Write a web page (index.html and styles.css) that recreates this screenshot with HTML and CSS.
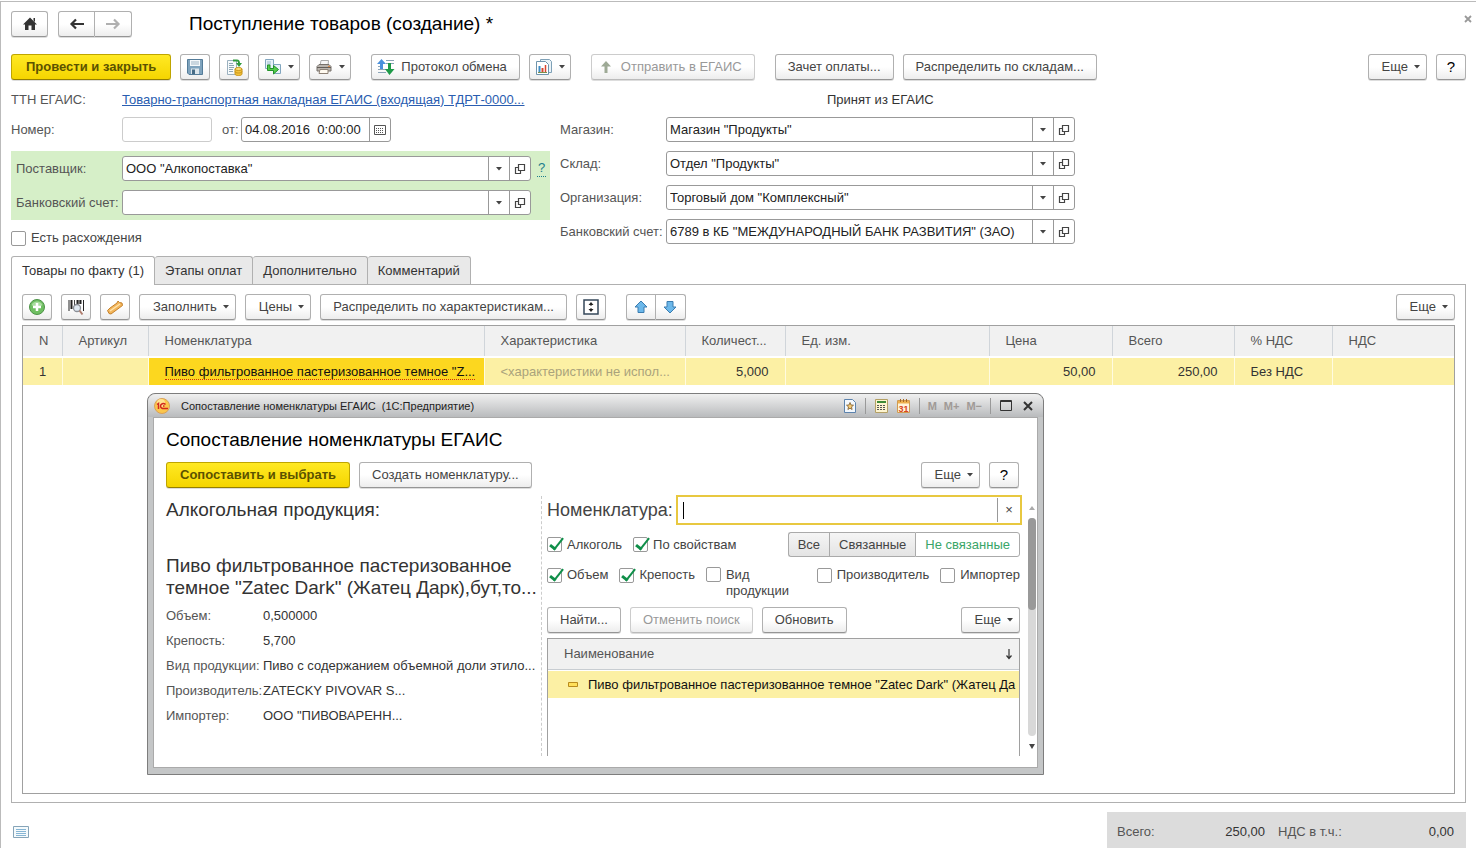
FILE: index.html
```html
<!DOCTYPE html>
<html lang="ru">
<head>
<meta charset="utf-8">
<title>Поступление товаров (создание)</title>
<link rel="stylesheet" href="styles.css">
</head>
<body>
<svg class="defs" aria-hidden="true">
  <symbol id="open" viewBox="0 0 12 12"><path d="M4.5 1.5h6v6h-6zM4 4.500H1.500v6h5V8" fill="none" stroke="#444" stroke-width="1.2"/></symbol>
  <symbol id="caret" viewBox="0 0 6 4"><path d="M0 0h6L3 3.500z" fill="#444"/></symbol>
</svg>
<main class="page">
  <header class="head">
    <button class="btn home" aria-label="Начальная страница"><svg width="16" height="14" viewBox="0 0 16 14"><path d="M8 .5 15 7.500h-2V13H9.500V8.500h-3V13H3V7.500H1zM11.500 1H13v4l-1.500-1.500z" fill="#333"/></svg></button>
    <div class="group">
      <button class="btn" aria-label="Назад"><svg width="16" height="12" viewBox="0 0 16 12"><path d="M15 6H3M7 1.500 2.500 6 7 10.500" fill="none" stroke="#333" stroke-width="2.200"/></svg></button>
      <button class="btn" aria-label="Вперед"><svg width="16" height="12" viewBox="0 0 16 12"><path d="M1 6h12M9 1.500 13.500 6 9 10.500" fill="none" stroke="#b0b0b0" stroke-width="2.200"/></svg></button>
    </div>
    <h1>Поступление товаров (создание) *</h1>
    <button class="close" aria-label="Закрыть"><svg width="8" height="8" viewBox="0 0 8 8"><path d="M1 1l6 6M7 1 1 7" stroke="#999" stroke-width="1.800"/></svg></button>
  </header>

  <div class="bar">
    <button class="btn primary">Провести и закрыть</button>
    <button class="btn icon" aria-label="Записать"><svg width="18" height="18" viewBox="0 0 18 18"><path d="M1.500 1.500h15v15H3l-1.500-1.500z" fill="#7fa3bd" stroke="#547c99"/><path d="M4 2h10v6H4z" fill="#f4f8fa"/><path d="M5 4h8M5 6h8" stroke="#9fb5c4"/><path d="M5 10.500h8V16H5z" fill="#dce6ec"/><path d="M6 11.500h3V16H6z" fill="#476c87"/></svg></button>
    <button class="btn icon" aria-label="Провести"><svg width="18" height="18" viewBox="0 0 18 18"><path d="M2.500 2.500h9v14h-9z" fill="#f6fafc" stroke="#9bb1bf"/><path d="M4 5.500h4M4 7.500h5M4 9.500h5M4 11.500h4M4 13.500h4" stroke="#8fa6b5"/><path d="M8 2.500h4c2 0 2 1 2 3" fill="none" stroke="#2f9a3c" stroke-width="2"/><path d="M11 5h6l-3 4z" fill="#2f9a3c"/><path d="M10 11v5c0 2 7 2 7 0v-5" fill="#f3c33d" stroke="#c99418"/><ellipse cx="13.500" cy="11" rx="3.500" ry="1.500" fill="#ffe27a" stroke="#c99418"/><path d="M10 13.500c0 2 7 2 7 0" fill="none" stroke="#c99418"/></svg></button>
    <button class="btn icon drop" aria-label="Создать на основании"><svg width="18" height="18" viewBox="0 0 18 18"><path d="M1.500 1.500h8v9h-8zM9.500 6.500h7v9h-7z" fill="#e8f2f9" stroke="#82a6bf"/><path d="M3 4h4M3 6h4" stroke="#9dbacd"/><path d="M3.500 7v5.500h6V16l5-4.500-5-4v3H6V7z" fill="#55cb4b" stroke="#21932a"/></svg><svg class="caret"><use href="#caret"/></svg></button>
    <button class="btn icon drop" aria-label="Печать"><svg width="18" height="18" viewBox="0 0 18 18"><path d="M5 8 6 2.500h7.500L13 8z" fill="#f7f7f7" stroke="#aaa"/><path d="M2 8.500 4 6.500h10l2 2V13H2z" fill="#b9b4ae" stroke="#77716b"/><path d="M2 9.500h14" stroke="#625d58"/><path d="M5 11.500h8v4H4z" fill="#fffaf0" stroke="#8d8175"/><circle cx="14" cy="8.500" r=".8" fill="#e37b27"/></svg><svg class="caret"><use href="#caret"/></svg></button>
    <button class="btn gap"><svg class="lead" width="18" height="18" viewBox="0 0 18 18"><path d="M9 2.500h8M9 5.500h2M14 5.500h3M1 11.500h8M1 14.500h8M1 8.500h2" stroke="#8ba5b8"/><path d="M4.500 1 9 6H6v5H3V6H0z" fill="#4a90dc"/><path d="M11 5h3v6h3.500L12.500 17 8 11h3z" fill="#1e9a48"/></svg>Протокол обмена</button>
    <button class="btn icon drop" aria-label="Отчеты"><svg width="18" height="18" viewBox="0 0 18 18"><path d="M5.500 1.500h9l2 2v11h-11z" fill="#eaf3f8" stroke="#7fa1b7"/><path d="M1.500 3.500h9l3 3v10h-12z" fill="#fff" stroke="#6e94ac"/><path d="M4.500 8v6" stroke="#3f8cc5" stroke-width="2"/><path d="M7.500 10v4" stroke="#d8442e" stroke-width="2"/><path d="M10.500 7v7" stroke="#d8442e" stroke-width="1.500"/><path d="M3 14.500h9" stroke="#7a8f4b"/></svg><svg class="caret"><use href="#caret"/></svg></button>
    <button class="btn gap" disabled><svg class="lead" width="18" height="18" viewBox="0 0 18 18"><path d="M9 3 14 8.500h-3.500V15h-3V8.500H4z" fill="#9eaa96"/></svg>Отправить в ЕГАИС</button>
    <button class="btn gap">Зачет оплаты...</button>
    <button class="btn">Распределить по складам...</button>
    <button class="btn more push">Еще<svg class="caret"><use href="#caret"/></svg></button>
    <button class="btn icon help">?</button>
  </div>

  <div class="ttn">
    <span class="lab">ТТН ЕГАИС:</span>
    <a href="#">Товарно-транспортная накладная ЕГАИС (входящая) ТДРТ-0000...</a>
    <span class="status">Принят из ЕГАИС</span>
  </div>

  <div class="form">
    <div class="col left">
      <div class="row">
        <label class="lab" for="num">Номер:</label>
        <div class="field num"><input id="num"></div>
        <label class="from" for="date">от:</label>
        <div class="field date"><input id="date" value="04.08.2016  0:00:00"><button aria-label="Выбрать дату"><svg width="12" height="12" viewBox="0 0 12 12"><path d="M.5 1.500h11v9H.5z" fill="#fff" stroke="#555"/><path d="M2 4.500h8M2 6.500h8M2 8.500h8" stroke="#555" stroke-dasharray="1 1"/></svg></button></div>
      </div>
      <div class="green">
        <div class="row">
          <label class="lab" for="sup">Поставщик:</label>
          <div class="field"><input id="sup" value='ООО "Алкопоставка"'><button aria-label="Выбрать"><svg class="caret"><use href="#caret"/></svg></button><button aria-label="Открыть"><svg width="12" height="12"><use href="#open"/></svg></button></div>
          <a class="hint" href="#">?</a>
        </div>
        <div class="row">
          <label class="lab" for="acc">Банковский счет:</label>
          <div class="field"><input id="acc"><button aria-label="Выбрать"><svg class="caret"><use href="#caret"/></svg></button><button aria-label="Открыть"><svg width="12" height="12"><use href="#open"/></svg></button></div>
          <span class="hint"></span>
        </div>
      </div>
      <label class="check"><input type="checkbox">Есть расхождения</label>
    </div>
    <div class="col right">
      <div class="row"><label class="lab" for="shop">Магазин:</label><div class="field"><input id="shop" value='Магазин "Продукты"'><button aria-label="Выбрать"><svg class="caret"><use href="#caret"/></svg></button><button aria-label="Открыть"><svg width="12" height="12"><use href="#open"/></svg></button></div></div>
      <div class="row"><label class="lab" for="store">Склад:</label><div class="field"><input id="store" value='Отдел "Продукты"'><button aria-label="Выбрать"><svg class="caret"><use href="#caret"/></svg></button><button aria-label="Открыть"><svg width="12" height="12"><use href="#open"/></svg></button></div></div>
      <div class="row"><label class="lab" for="org">Организация:</label><div class="field"><input id="org" value='Торговый дом "Комплексный"'><button aria-label="Выбрать"><svg class="caret"><use href="#caret"/></svg></button><button aria-label="Открыть"><svg width="12" height="12"><use href="#open"/></svg></button></div></div>
      <div class="row"><label class="lab" for="bank">Банковский счет:</label><div class="field"><input id="bank" value='6789 в КБ "МЕЖДУНАРОДНЫЙ БАНК РАЗВИТИЯ" (ЗАО)'><button aria-label="Выбрать"><svg class="caret"><use href="#caret"/></svg></button><button aria-label="Открыть"><svg width="12" height="12"><use href="#open"/></svg></button></div></div>
    </div>
  </div>

  <div class="tabs" role="tablist">
    <button class="tab active" role="tab" aria-selected="true">Товары по факту (1)</button>
    <button class="tab" role="tab">Этапы оплат</button>
    <button class="tab" role="tab">Дополнительно</button>
    <button class="tab" role="tab">Комментарий</button>
  </div>
  <section class="panel">
    <div class="bar">
      <button class="btn icon" aria-label="Добавить"><svg width="18" height="18" viewBox="0 0 18 18"><circle cx="9" cy="9" r="7.500" fill="#6fbf62" stroke="#4d9347"/><path d="M3.500 7a6 6 0 0 1 11 0c-3 2-8 2-11 0z" fill="#a9dc9f"/><path d="M9 5v8M5 9h8" stroke="#fff" stroke-width="2.500"/></svg></button>
      <button class="btn icon" aria-label="Поиск по штрихкоду"><svg width="18" height="18" viewBox="0 0 18 18"><path d="M2 2v11M16.500 2v11" stroke="#222"/><path d="M4.500 2v9M10.500 2v4M13.500 2v4" stroke="#222" stroke-width="2"/><path d="M7.500 2v5M12 2v4" stroke="#444"/><circle cx="10" cy="10" r="3.500" fill="#dfe9f2" stroke="#8b8f96" stroke-width="1.300"/><path d="m12.500 12.500 3 4" stroke="#b07f70" stroke-width="2"/></svg></button>
      <button class="btn icon" aria-label="Скидка"><svg width="18" height="18" viewBox="0 0 18 18"><path d="M1.500 12.500 4 10l7-5 1-2 1.500 1.500 2.500.5.500 2.500L5 16l-2-.500z" fill="#f3b65b" stroke="#c5812b"/><path d="m4 13 10-7" stroke="#ffe3ab" stroke-width="1.500"/></svg></button>
      <button class="btn more">Заполнить<svg class="caret"><use href="#caret"/></svg></button>
      <button class="btn more">Цены<svg class="caret"><use href="#caret"/></svg></button>
      <button class="btn">Распределить по характеристикам...</button>
      <button class="btn icon" aria-label="Высота строк"><svg width="16" height="16" viewBox="0 0 16 16"><path d="M1 1h14v14H1z" fill="#fff" stroke="#34475a" stroke-width="1.500"/><path d="M8 4v3M8 9v3" stroke="#222"/><path d="m5.500 6 2.500-3 2.500 3zM5.500 10 8 13l2.500-3z" fill="#222"/></svg></button>
      <div class="group small gap">
        <button class="btn" aria-label="Вверх"><svg width="14" height="14" viewBox="0 0 14 14"><path d="M7 1 13 7h-3v5.500H4V7H1z" fill="#6cb8ea" stroke="#3a7cb0"/></svg></button>
        <button class="btn" aria-label="Вниз"><svg width="14" height="14" viewBox="0 0 14 14"><path d="M7 13 1 7h3V1.500h6V7h3z" fill="#6cb8ea" stroke="#3a7cb0"/></svg></button>
      </div>
      <button class="btn more push">Еще<svg class="caret"><use href="#caret"/></svg></button>
    </div>
    <div class="grid">
      <table>
        <colgroup><col class="c1"><col class="c2"><col class="c3"><col class="c4"><col class="c5"><col class="c6"><col class="c7"><col class="c8"><col class="c9"><col class="c10"></colgroup>
        <thead><tr><th>N</th><th>Артикул</th><th>Номенклатура</th><th>Характеристика</th><th>Количест...</th><th>Ед. изм.</th><th>Цена</th><th>Всего</th><th>% НДС</th><th>НДС</th></tr></thead>
        <tbody><tr><td>1</td><td></td><td class="current"><span>Пиво фильтрованное пастеризованное темное "Z...</span></td><td class="muted">&lt;характеристики не испол...</td><td class="n">5,000</td><td></td><td class="n">50,00</td><td class="n">250,00</td><td>Без НДС</td><td></td></tr></tbody>
      </table>
    </div>
  </section>

  <footer class="foot">
    <svg width="16" height="12" viewBox="0 0 16 12"><path d="M.5.5h15v11H.5z" fill="#f5fafc" stroke="#86a4b8"/><path d="M3 3.500h10M3 5.500h10M3 7.500h10M3 9.500h10" stroke="#86b5d4"/></svg>
    <dl class="totals"><dt>Всего:</dt><dd>250,00</dd><dt>НДС в т.ч.:</dt><dd>0,00</dd></dl>
  </footer>
</main>

<div class="dialog" role="dialog" aria-labelledby="dt">
  <div class="titlebar">
    <svg width="16" height="16" viewBox="0 0 16 16"><circle cx="8" cy="8" r="7.500" fill="#fbc64c" stroke="#d9a05a"/><circle cx="7" cy="5" r="4" fill="#ffe391"/><path d="M3 6.500 4.500 5.500V11M11.500 6.500C9.500 4.500 6.500 6 6.500 8s2 2.800 3.500 2.500h4M10.500 8H9" fill="none" stroke="#d2281e" stroke-width="1.500"/></svg>
    <span class="caption">Сопоставление номенклатуры ЕГАИС&nbsp; (1С:Предприятие)</span>
    <button aria-label="Избранное"><svg width="12" height="14" viewBox="0 0 12 14"><path d="M.5.5h8l3 3v10H.5z" fill="#f3f8fd" stroke="#5c83ad"/><path d="m6 3.500 1 2.500 2.500.2-2 1.700.6 2.600L6 9.200l-2.100 1.300.6-2.600-2-1.700L5 6z" fill="#f5ca72" stroke="#7b5a2c" stroke-width=".8"/></svg></button>
    <i class="sep"></i>
    <button aria-label="Калькулятор"><svg width="13" height="14" viewBox="0 0 13 14"><path d="M.5.5h12v13H.5z" fill="#fdf4d0" stroke="#b4a064"/><path d="M2 3h9" stroke="#3d8b37" stroke-width="2"/><path d="M2 6.500h9M2 8.500h9M2 10.500h9" stroke="#555" stroke-dasharray="2 1"/></svg></button>
    <button aria-label="Календарь"><svg width="13" height="14" viewBox="0 0 13 14"><path d="M.5 1.500h12v12H.5z" fill="#fff5dc" stroke="#d09a50"/><path d="M1 2h11v2.500H1z" fill="#eeb04e"/><path d="M3.500 0v3M6.500 0v3M9.500 0v3" stroke="#a56a26"/><text x="6.500" y="12.500" text-anchor="middle" class="daynum">31</text></svg></button>
    <i class="sep"></i>
    <button class="mem">M</button><button class="mem">M+</button><button class="mem">M−</button>
    <i class="sep"></i>
    <button aria-label="Развернуть"><svg width="12" height="11" viewBox="0 0 12 11"><path d="M.5.5h11v10H.5zM0 1.500h12" fill="none" stroke="#333"/></svg></button>
    <button class="dclose" aria-label="Закрыть"><svg width="10" height="10" viewBox="0 0 10 10"><path d="m1 1 8 8M9 1 1 9" stroke="#333" stroke-width="2"/></svg></button>
  </div>
  <div class="client">
    <h2 id="dt">Сопоставление номенклатуры ЕГАИС</h2>
    <div class="bar">
      <button class="btn primary">Сопоставить и выбрать</button>
      <button class="btn">Создать номенклатуру...</button>
      <button class="btn more push">Еще<svg class="caret"><use href="#caret"/></svg></button>
      <button class="btn icon help">?</button>
    </div>
    <div class="split">
      <div class="info">
        <h3>Алкогольная продукция:</h3>
        <p class="product">Пиво фильтрованное пастеризованное<br>темное "Zatec Dark" (Жатец Дарк),бут,то...</p>
        <dl class="props">
          <dt>Объем:</dt><dd>0,500000</dd>
          <dt>Крепость:</dt><dd>5,700</dd>
          <dt>Вид продукции:</dt><dd>Пиво с содержанием объемной доли этило...</dd>
          <dt>Производитель:</dt><dd>ZATECKY PIVOVAR S...</dd>
          <dt>Импортер:</dt><dd>ООО "ПИВОВАРЕНН...</dd>
        </dl>
      </div>
      <div class="search">
        <div class="query"><label for="q">Номенклатура:</label><div class="qbox"><i class="cursor"></i><input id="q"><button aria-label="Очистить">×</button></div></div>
        <div class="filters">
          <label class="check"><input type="checkbox" checked>Алкоголь</label>
          <label class="check"><input type="checkbox" checked>По свойствам</label>
          <div class="switch"><button>Все</button><button>Связанные</button><button class="on">Не связанные</button></div>
        </div>
        <div class="filters second">
          <label class="check"><input type="checkbox" checked>Объем</label>
          <label class="check"><input type="checkbox" checked>Крепость</label>
          <label class="check kind"><input type="checkbox">Вид<br>продукции</label>
          <label class="check push"><input type="checkbox">Производитель</label>
          <label class="check"><input type="checkbox">Импортер</label>
        </div>
        <div class="bar">
          <button class="btn">Найти...</button>
          <button class="btn" disabled>Отменить поиск</button>
          <button class="btn">Обновить</button>
          <button class="btn more push">Еще<svg class="caret"><use href="#caret"/></svg></button>
        </div>
        <div class="list">
          <div class="lhead">Наименование<svg width="8" height="12" viewBox="0 0 8 12"><path d="M4 1v9M1.500 7.500 4 10.500l2.500-3" fill="none" stroke="#333" stroke-width="1.200"/></svg></div>
          <div class="litem"><svg width="10" height="5" viewBox="0 0 10 5"><path d="M.5.5h9v4h-9z" fill="#ffe05a" stroke="#b98a1c"/></svg><span>Пиво фильтрованное пастеризованное темное "Zatec Dark" (Жатец Да</span></div>
        </div>
      </div>
      <div class="scroll" aria-hidden="true"><svg width="8" height="4" viewBox="0 0 8 4"><path d="M1 4h6L4 0z" fill="#aaa"/></svg><div class="track"><div class="thumb"></div></div><svg width="8" height="5" viewBox="0 0 8 5"><path d="M1 0h6L4 5z" fill="#444"/></svg></div>
    </div>
  </div>
</div>
</body>
</html>
```
FILE: styles.css
```css
* { box-sizing: border-box; }
body { margin: 0; background: #fff; color: #333; font: 13px/16px "Liberation Sans", Arial, sans-serif; position: relative; }
button, input { font: inherit; color: inherit; margin: 0; }
button { cursor: pointer; }
h1, h2, h3, p, dl, dd { margin: 0; font-weight: normal; }
.defs { display: none; }
.caret { width: 6px; height: 4px; flex: none; }

.page { display: flex; flex-direction: column; margin-top: 1px; border-top: 1px solid #bbb; border-left: 1px solid #bbb; padding: 9px 10px 0; min-height: calc(100vh - 1px); }
.head { display: flex; align-items: center; gap: 10px; height: 26px; margin-bottom: 17px; }
.head h1 { font-size: 19px; line-height: 24px; color: #000; margin-left: 47px; flex: 1; }
.close { border: 0; background: none; padding: 0; width: 8px; height: 16px; align-self: flex-start; margin-right: -6px; }

.bar { display: flex; gap: 9px; }
.btn { display: inline-flex; align-items: center; justify-content: center; gap: 6px; height: 26px; padding: 0 12px; white-space: nowrap; color: #444; background: linear-gradient(#fff 50%, #ededed); border: 1px solid #b0b0b0; border-bottom-color: #959595; border-radius: 3px; box-shadow: 0 1px 0 #ddd; font-size: 13px; }
.btn.primary { padding: 0 14px; font-weight: bold; color: #5b5200; background: linear-gradient(#ffe924, #f5d500); border-color: #bfa500; border-bottom-color: #957f00; }
.client .btn.primary { padding: 0 13px; }
.btn.icon { width: 30px; padding: 0; }
.btn.icon.drop { width: 42px; gap: 6px; }
.btn.help { color: #000; font-size: 15px; }
.btn.more { padding: 0 6px 0 13px; }
.btn:disabled { color: #999; border-color: #ccc; border-bottom-color: #bbb; }
.gap { margin-left: 11px; }
.lead { margin-left: -7px; }
.push { margin-left: auto; }
.btn.home { width: 37px; padding: 0; }
.group { display: flex; }
.group .btn { width: 37px; padding: 0; }
.group .btn:first-child { border-radius: 3px 0 0 3px; }
.group .btn + .btn { border-radius: 0 3px 3px 0; border-left: 0; }
.group.small .btn { width: 30px; }

.ttn { display: flex; margin: 12px 0 9px; }
.lab { width: 111px; flex: none; color: #555; white-space: nowrap; }
.ttn a { color: #2a5db0; width: 398px; white-space: nowrap; }
.status { margin-left: 307px; }

.form { display: flex; gap: 10px; }
.col { display: flex; flex-direction: column; gap: 9px; }
.left { width: 539px; }
.right { width: 515px; }
.row { display: flex; align-items: center; }
.right .lab { width: 106px; }
.field { display: flex; flex: 1; height: 25px; background: #fff; border: 1px solid #999; border-radius: 3px; overflow: hidden; }
.field input { flex: 1; min-width: 0; border: 0; outline: 0; background: none; padding: 0 3px; color: #222; white-space: pre; }
.field button { display: flex; align-items: center; justify-content: center; width: 21px; padding: 0; border: 0; border-left: 1px solid #999; background: none; }
.field.num { flex: none; width: 90px; border-color: #ccc; }
.from { width: 29px; padding-left: 10px; color: #555; }
.field.date { flex: none; width: 150px; }
.green { display: flex; flex-direction: column; gap: 9px; background: #d6efc8; padding: 5px 4px 5px 5px; }
.green .lab { width: 106px; }
.hint { width: 9px; margin-left: 6px; text-align: center; color: #1b7d8c; text-decoration: none; }
a.hint { border-bottom: 1px dotted #1b7d8c; }

.check { display: flex; align-items: center; gap: 5px; color: #444; }
.check input { appearance: none; width: 15px; height: 15px; flex: none; border: 1px solid #999; border-radius: 2px; background: #fff; position: relative; }
.check input:checked::after { content: ""; position: absolute; left: 5px; top: -3px; width: 5px; height: 12px; border: solid #0f8f49; border-width: 0 2px 3px 0; transform: rotate(38deg); }
.left > .check { margin-top: 1px; }

.tabs { display: flex; margin-top: 10px; position: relative; }
.tab { height: 28px; padding: 0 10px; border: 1px solid #b0b0b0; border-left: 0; border-bottom: 0; background: #e9e9e9; border-radius: 3px 3px 0 0; color: #333; }
.tab.active { background: #fff; border-left: 1px solid #b0b0b0; height: 29px; margin-bottom: -1px; }
.panel { flex: 1; display: flex; flex-direction: column; border: 1px solid #b0b0b0; padding: 9px 10px 8px; }
.panel .bar { margin-bottom: 5px; }
.grid { flex: 1; border: 1px solid #a0a0a0; }
table { width: 100%; table-layout: fixed; border-collapse: collapse; }
th, td { font-weight: normal; text-align: left; padding: 0 16px; white-space: nowrap; overflow: hidden; }
th { height: 31px; background: #f1f1f1; color: #555; border-right: 1px solid #d0d5da; border-bottom: 1px solid #c8cdd2; }
td { height: 28px; background: #fcf0a4; border-right: 1px solid #fffbe0; border-top: 2px solid #fff; }
th:last-child, td:last-child { border-right: 0; }
td.n { text-align: right; }
td.current { background: #fcd71f; color: #111; }
.current span { border-bottom: 1px dotted #d0300a; }
td.muted { color: #aaa37c; }
.c1 { width: 39px; } .c2 { width: 86px; } .c3 { width: 336px; } .c4 { width: 201px; } .c5 { width: 100px; }
.c6 { width: 204px; } .c7 { width: 123px; } .c8 { width: 122px; } .c9 { width: 98px; } .c10 { width: 122px; }

.foot { display: flex; justify-content: space-between; margin-top: 9px; height: 36px; padding-left: 2px; }
.foot > svg { margin-top: 14px; }
.totals { display: grid; grid-template-columns: 62px 86px 87px 1fr; align-items: center; background: #dcdcdc; padding: 4px 12px 0 10px; width: 359px; }
.totals dt { color: #555; }
.totals dt + dd + dt { padding-left: 13px; }
.totals dd { text-align: right; }

.dialog { position: absolute; left: 147px; top: 393px; width: 897px; height: 382px; display: flex; flex-direction: column; background: #c4c6c7; border: 1px solid #7d7d7d; border-radius: 8px 8px 0 0; padding: 0 5px 6px; }
.titlebar { display: flex; align-items: center; gap: 9px; height: 23px; margin: 0 -5px; padding: 0 10px 0 6px; border-radius: 8px 8px 0 0; background: linear-gradient(#f0f0f0, #b9bbbd); flex: none; }
.titlebar button { border: 0; background: none; padding: 0; display: flex; }
.caption { flex: 1; font-size: 11px; margin-left: 2px; color: #222; }
.sep { width: 1px; height: 16px; background: #999; }
.titlebar .mem { color: #a09a96; font-weight: bold; font-size: 11px; margin: 0 -1px; }
.titlebar .dclose { margin-left: 2px; }
.daynum { font: bold 9px "Liberation Sans", Arial, sans-serif; fill: #d9441c; }
.client { flex: 1; min-height: 0; display: flex; flex-direction: column; background: #fff; border: 1px solid #aaa; padding: 11px 1px 11px 12px; }
h2 { font-size: 19px; line-height: 22px; color: #000; margin-bottom: 11px; }
.client > .bar { padding-right: 17px; }
.split { flex: 1; min-height: 0; display: flex; margin-top: 8px; }
.info { width: 376px; flex: none; border-right: 1px dashed #ccc; }
h3 { font-size: 19px; line-height: 28px; margin-bottom: 31px; }
.product { font-size: 19px; line-height: 22px; white-space: nowrap; }
.props { display: grid; grid-template-columns: 97px 1fr; margin-top: 4px; line-height: 25px; white-space: nowrap; }
.props dt { color: #555; }
.search { flex: 1; min-width: 0; padding-left: 5px; display: flex; flex-direction: column; }
.query { display: flex; align-items: center; margin: -1px -2px 0 0; font-size: 18px; color: #444; }
.qbox { flex: 1; min-width: 0; display: flex; align-items: center; height: 30px; border: 2px solid #e8c840; padding: 2px 0; margin-left: 3px; }
.qbox input { flex: 1; min-width: 0; border: 0; outline: 0; padding: 0; }
.qbox button { width: 23px; height: 24px; border: 0; border-left: 1px solid #999; background: none; font-size: 13px; padding: 0; }
.cursor { width: 1px; height: 17px; background: #000; margin-left: 5px; }
.filters { display: flex; align-items: center; gap: 11px; margin-top: 7px; }
.switch { display: flex; margin-left: auto; }
.switch button { height: 25px; border: 1px solid #aaa; border-right: 0; background: linear-gradient(#f5f5f5, #e4e4e4); padding: 0 9px; color: #444; white-space: nowrap; }
.switch button:first-child { border-radius: 3px 0 0 3px; }
.switch .on { background: #fff; color: #3aa568; border-right: 1px solid #aaa; border-radius: 0 3px 3px 0; }
.second { align-items: flex-start; margin-top: 10px; }
.kind { align-items: flex-start; }
.search .bar { margin-top: 8px; }
.list { flex: 1; border: 1px solid #a0a0a0; border-bottom: 0; margin-top: 5px; overflow: hidden; }
.lhead { display: flex; align-items: center; justify-content: space-between; height: 31px; padding: 0 6px 0 16px; background: #f1f1f1; color: #555; border-bottom: 1px solid #c8cdd2; }
.litem { display: flex; align-items: center; gap: 10px; height: 27px; margin-top: 1px; padding-left: 20px; background: #fcf0a4; color: #111; white-space: nowrap; }
.litem svg { flex: none; }
.scroll { width: 16px; flex: none; display: flex; flex-direction: column; align-items: flex-end; padding: 10px 0 7px; gap: 8px; }
.track { flex: 1; width: 8px; border-radius: 4px; background: #d8d8d8; }
.thumb { width: 8px; height: 92px; border-radius: 4px; background: #999; }
```
